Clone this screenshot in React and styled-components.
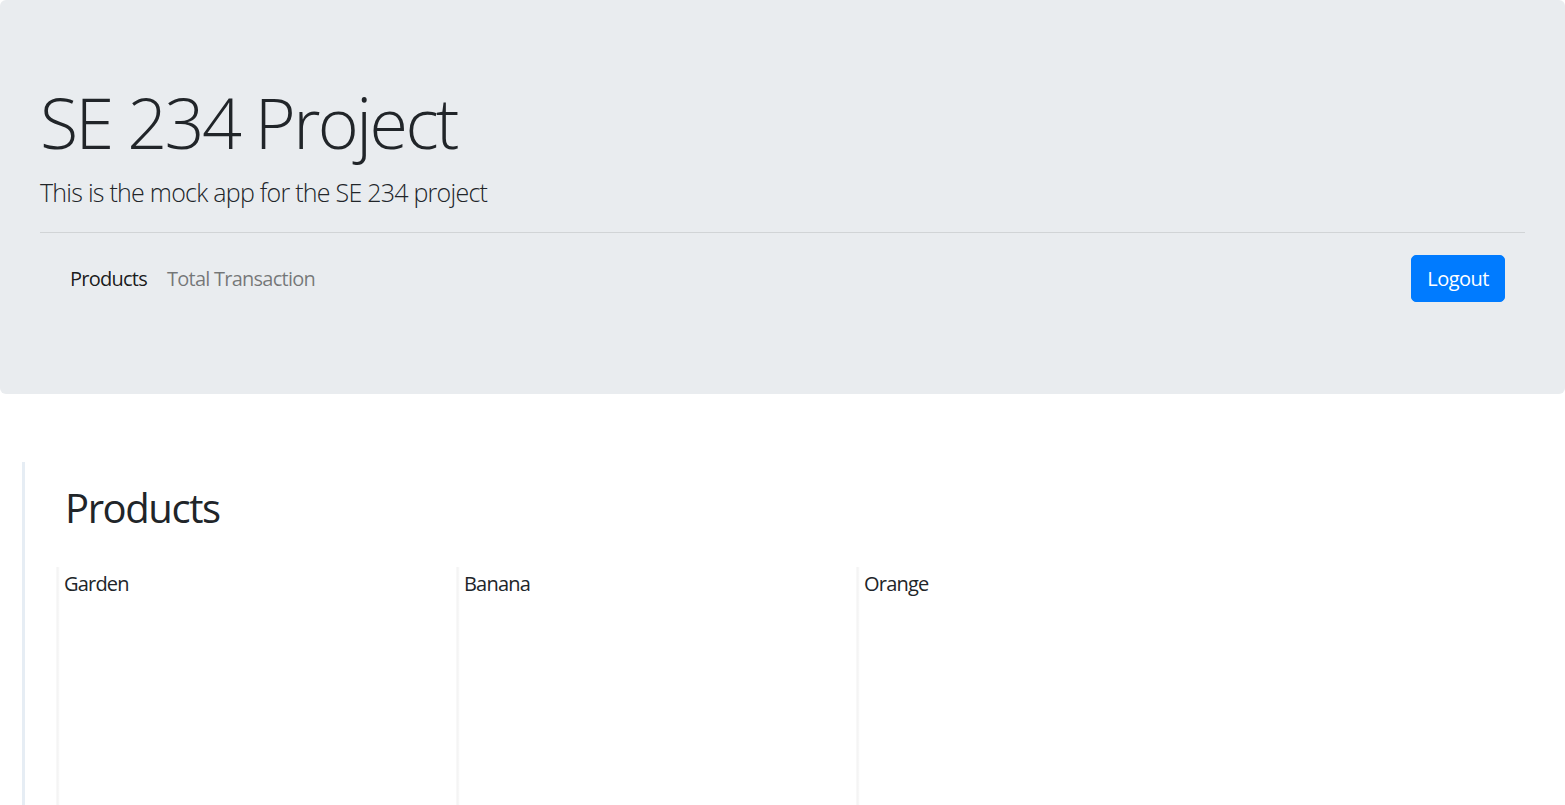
import React from "react";
import styled, { createGlobalStyle } from "styled-components";

const GlobalStyle = createGlobalStyle`
  body {
    margin: 0;
    background: #fff;
    color: #212529;
    font-family: "Open Sans", "Noto Sans", "Liberation Sans", sans-serif;
    font-size: 20px;
    line-height: 1.5;
  }
  * { box-sizing: border-box; }
`;

const products = ["Garden", "Banana", "Orange"];

export default function App() {
  return (
    <>
      <GlobalStyle />
      <Jumbotron>
        <Title>SE 234 Project</Title>
        <Lead>This is the mock app for the SE 234 project</Lead>
        <Divider />
        <Navbar>
          <NavLinks>
            <NavLink active>Products</NavLink>
            <NavLink>Total Transaction</NavLink>
          </NavLinks>
          <LogoutButton>Logout</LogoutButton>
        </Navbar>
      </Jumbotron>
      <Section>
        <Heading>Products</Heading>
        <CardRow>
          {products.map((name) => (
            <Card key={name}>{name}</Card>
          ))}
        </CardRow>
      </Section>
    </>
  );
}

const Jumbotron = styled.header`
  background: #e9ecef;
  border-radius: 6px;
  padding: 80px 40px;
`;

const Title = styled.h1`
  margin: 0 0 10px;
  font-size: 70px;
  font-weight: 300;
  line-height: 1.2;
  letter-spacing: -2.6px;
`;

const Lead = styled.p`
  margin: 0 0 20px;
  font-size: 25px;
  font-weight: 300;
  line-height: 1.5;
  letter-spacing: -0.75px;
`;

const Divider = styled.hr`
  margin: 0;
  border: 0;
  border-top: 1px solid rgba(0, 0, 0, 0.1);
`;

const Navbar = styled.nav`
  display: flex;
  align-items: center;
  justify-content: space-between;
  margin-top: 11px;
  padding: 10px 20px;
`;

const NavLinks = styled.div`
  display: flex;
`;

const NavLink = styled.a`
  padding: 10px;
  color: ${(p) => (p.active ? "rgba(0, 0, 0, 0.9)" : "rgba(0, 0, 0, 0.5)")};
  font-size: 20px;
  letter-spacing: -0.75px;
  cursor: pointer;
`;

const LogoutButton = styled.button`
  height: 47px;
  padding: 7px 15px;
  border: 1px solid #007bff;
  border-radius: 5px;
  background: #007bff;
  color: #fff;
  font-family: inherit;
  font-size: 20px;
  line-height: 1.5;
  letter-spacing: -0.5px;
  cursor: pointer;
`;

const Section = styled.main`
  margin: 68px 0 0 22px;
  border-left: 3px solid #e6edf4;
  padding: 22px 0 0;
`;

const Heading = styled.h2`
  margin: 0 0 35px 40px;
  font-size: 40px;
  font-weight: 400;
  line-height: 1.2;
  letter-spacing: -1.4px;
`;

const CardRow = styled.div`
  display: flex;
  padding-left: 31px;
`;

const Card = styled.div`
  width: 400px;
  min-height: 260px;
  padding: 2px 8px;
  background: linear-gradient(to right, #fafafa, #f2f2f2 2px, #fbfbfb 3px, #fff 4px);
  font-size: 20px;
  letter-spacing: -0.8px;
`;
